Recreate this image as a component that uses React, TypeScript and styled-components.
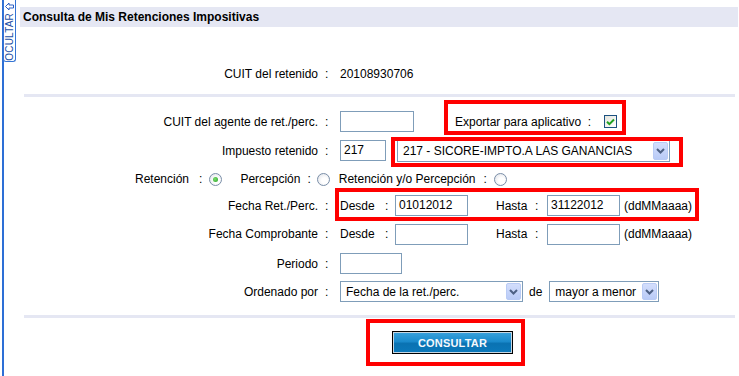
import styled, { createGlobalStyle } from 'styled-components';

const GlobalStyle = createGlobalStyle`
  body {
    margin: 0;
    background: #fff;
    font-family: "Liberation Sans", Arial, sans-serif;
    font-size: 12px;
    color: #000;
  }
`;

const Page = styled.div`
  display: flex;
  height: 376px;
  overflow: hidden;
`;

const SideBar = styled.div`
  position: relative;
  flex: none;
  width: 16px;
  margin-left: 2px;
  border-left: 2px solid #2d6fd6;
`;

const HideTab = styled.div`
  position: absolute;
  top: 0;
  left: -1px;
  width: 13px;
  height: 62px;
  box-sizing: border-box;
  border: 1px solid #3574d4;
  border-top: none;
  border-radius: 0 0 3px 3px;
  background: #fff;
  display: flex;
  flex-direction: column;
  align-items: center;
  padding-top: 2px;
  gap: 2px;
`;

const TabText = styled.span`
  writing-mode: vertical-rl;
  transform: rotate(180deg);
  font-size: 10px;
  line-height: 11px;
  color: #1d4fa5;
  letter-spacing: 0.2px;
`;

const Main = styled.div`
  flex: 1;
  display: flex;
  flex-direction: column;
`;

const Header = styled.div`
  margin: 7px 1px 0 0;
  height: 20px;
  padding-left: 3px;
  background: #e5e7f3;
  display: flex;
  align-items: center;
  font-weight: bold;
`;

const Separator = styled.div<{ $top: number }>`
  margin: ${p => p.$top}px 4px 0 4px;
  height: 3px;
  background: #e5e7f3;
`;

const Row = styled.div<{ $h: number }>`
  display: grid;
  grid-template-columns: 298px 22px 1fr;
  align-items: center;
  height: ${p => p.$h}px;
`;

const Label = styled.div`
  text-align: right;
  white-space: nowrap;
`;

const Colon = styled.div`
  padding-left: 7px;
`;

const Field = styled.div`
  display: flex;
  align-items: center;
  white-space: nowrap;
`;

const Form = styled.div`
  padding-top: 10px;
`;

const TextBox = styled.div<{ $w: number }>`
  box-sizing: border-box;
  width: ${p => p.$w}px;
  height: 21px;
  border: 1px solid #7f9db9;
  background: #fff;
  padding: 2px 0 0 3px;
  line-height: 15px;
  flex: none;
`;

const SelectBox = styled.div<{ $w: number; $h: number }>`
  box-sizing: border-box;
  width: ${p => p.$w}px;
  height: ${p => p.$h}px;
  border: 1px solid #7f9db9;
  background: #fff;
  display: flex;
  align-items: center;
  justify-content: space-between;
  padding: 0 1px 0 5px;
  flex: none;
`;

const SelectArrow = styled.span`
  box-sizing: border-box;
  width: 15px;
  height: calc(100% - 2px);
  border: 1px solid #b9cbf5;
  border-radius: 2px;
  background: linear-gradient(#d3defc, #b9cbf7);
  display: flex;
  align-items: center;
  justify-content: center;
`;

const Marked = styled.div<{ $t: number; $r: number; $b: number; $l: number; $ml?: number }>`
  position: relative;
  display: inline-flex;
  align-items: center;
  margin-left: ${p => p.$ml ?? 0}px;
  &::after {
    content: '';
    position: absolute;
    top: ${p => -p.$t}px;
    right: ${p => -p.$r}px;
    bottom: ${p => -p.$b}px;
    left: ${p => -p.$l}px;
    border: 4px solid #ff0000;
    pointer-events: none;
  }
`;

const CheckBox = styled.span`
  box-sizing: border-box;
  width: 13px;
  height: 13px;
  margin-left: 13px;
  border: 1px solid #1c5180;
  background: linear-gradient(135deg, #e4e4dc, #fff);
  display: flex;
  align-items: center;
  justify-content: center;
`;

const RadioRow = styled.div`
  height: 28px;
  display: flex;
  align-items: center;
  padding-left: 115px;
  white-space: nowrap;
`;

const RadioColon = styled.span`
  margin: 0 7px 0 10px;
`;

const Radio = styled.span<{ $on?: boolean; $mr: number }>`
  box-sizing: border-box;
  width: 13px;
  height: 13px;
  border-radius: 50%;
  border: 1px solid #7a8ea8;
  background: radial-gradient(circle at 60% 60%, #fff 30%, #dcdfe5 100%);
  margin-right: ${p => p.$mr}px;
  display: flex;
  align-items: center;
  justify-content: center;
  &::after {
    content: '';
    display: ${p => (p.$on ? 'block' : 'none')};
    width: 5px;
    height: 5px;
    border-radius: 50%;
    background: radial-gradient(circle at 40% 40%, #7ede6e, #23a023);
  }
`;

const SubLabel = styled.span<{ $w: number; $ml?: number }>`
  display: inline-block;
  width: ${p => p.$w}px;
  margin-left: ${p => p.$ml ?? 0}px;
`;

const Hint = styled.span`
  margin-left: 4px;
`;

const Small = styled.span<{ $ml: number; $mr: number }>`
  margin: 0 ${p => p.$mr}px 0 ${p => p.$ml}px;
`;

const ButtonArea = styled.div`
  padding: 13px 0 0 372px;
`;

const ConsultButton = styled.button`
  box-sizing: border-box;
  width: 121px;
  height: 23px;
  padding: 0;
  border: 1px solid #000;
  box-shadow: inset 0 0 0 1px #c6d6e2;
  background: linear-gradient(#3aa2dc 0%, #1b8bcd 45%, #0a72b2 55%, #0b79bb 100%);
  color: #f4f8fc;
  font: bold 11px "Liberation Sans", Arial, sans-serif;
  letter-spacing: 0.2px;
  cursor: pointer;
`;

const Chevron = () => (
  <svg width="9" height="6" viewBox="0 0 9 6">
    <path d="M1 1 L4.5 4.5 L8 1" fill="none" stroke="#4d6185" strokeWidth="2" />
  </svg>
);

const Select = ({ w, h, text }: { w: number; h: number; text: string }) => (
  <SelectBox $w={w} $h={h}>
    <span>{text}</span>
    <SelectArrow>
      <Chevron />
    </SelectArrow>
  </SelectBox>
);

const DateRange = ({ from, to }: { from?: string; to?: string }) => (
  <>
    <SubLabel $w={45}>Desde</SubLabel>
    <SubLabel $w={10}>:</SubLabel>
    <TextBox $w={73}>{from}</TextBox>
    <SubLabel $w={39} $ml={28}>Hasta</SubLabel>
    <SubLabel $w={12}>:</SubLabel>
    <TextBox $w={73}>{to}</TextBox>
    <Hint>(ddMMaaaa)</Hint>
  </>
);

export default function App() {
  return (
    <>
      <GlobalStyle />
      <Page>
        <SideBar>
          <HideTab>
            <svg width="9" height="9" viewBox="0 0 9 9">
              <path d="M0.5 4.5 L4 1 V3 H8.5 V6 H4 V8 Z" fill="#fff" stroke="#2a5fc4" strokeWidth="1" />
            </svg>
            <TabText>OCULTAR</TabText>
          </HideTab>
        </SideBar>
        <Main>
          <Header>Consulta de Mis Retenciones Impositivas</Header>

          <Row $h={29} style={{ marginTop: 32 }}>
            <Label>CUIT del retenido</Label>
            <Colon>:</Colon>
            <Field>20108930706</Field>
          </Row>

          <Separator $top={6} />

          <Form>
            <Row $h={29}>
              <Label>CUIT del agente de ret./perc.</Label>
              <Colon>:</Colon>
              <Field>
                <TextBox $w={74} />
                <Marked $t={15} $r={9} $b={6} $l={11} $ml={41}>
                  <span>Exportar para aplicativo&nbsp; :</span>
                  <CheckBox>
                    <svg width="9" height="8" viewBox="0 0 9 8">
                      <path d="M1 3.8 L3.4 6.2 L8 1.5" fill="none" stroke="#21a121" strokeWidth="2" />
                    </svg>
                  </CheckBox>
                </Marked>
              </Field>
            </Row>

            <Row $h={29}>
              <Label>Impuesto retenido</Label>
              <Colon>:</Colon>
              <Field>
                <TextBox $w={46}>217</TextBox>
                <Marked $t={3} $r={13} $b={5} $l={6} $ml={11}>
                  <Select w={273} h={22} text="217 - SICORE-IMPTO.A LAS GANANCIAS" />
                </Marked>
              </Field>
            </Row>

            <RadioRow>
              <span>Retención</span>
              <RadioColon>:</RadioColon>
              <Radio $on $mr={18} />
              <span>Percepción</span>
              <RadioColon style={{ marginLeft: 7, marginRight: 6 }}>:</RadioColon>
              <Radio $mr={9} />
              <span>Retención y/o Percepción</span>
              <RadioColon style={{ marginLeft: 8, marginRight: 7 }}>:</RadioColon>
              <Radio $mr={0} />
            </RadioRow>

            <Row $h={25}>
              <Label>Fecha Ret./Perc.</Label>
              <Colon>:</Colon>
              <Field>
                <Marked $t={7} $r={7} $b={5} $l={5}>
                  <DateRange from="01012012" to="31122012" />
                </Marked>
              </Field>
            </Row>

            <Row $h={32}>
              <Label>Fecha Comprobante</Label>
              <Colon>:</Colon>
              <Field>
                <DateRange />
              </Field>
            </Row>

            <Row $h={27}>
              <Label>Periodo</Label>
              <Colon>:</Colon>
              <Field>
                <TextBox $w={62} />
              </Field>
            </Row>

            <Row $h={29}>
              <Label>Ordenado por</Label>
              <Colon>:</Colon>
              <Field>
                <Select w={183} h={21} text="Fecha de la ret./perc." />
                <Small $ml={6} $mr={7}>de</Small>
                <Select w={110} h={21} text="mayor a menor" />
              </Field>
            </Row>
          </Form>

          <Separator $top={9} />

          <ButtonArea>
            <Marked $t={12} $r={12} $b={12} $l={26}>
              <ConsultButton>CONSULTAR</ConsultButton>
            </Marked>
          </ButtonArea>
        </Main>
      </Page>
    </>
  );
}
